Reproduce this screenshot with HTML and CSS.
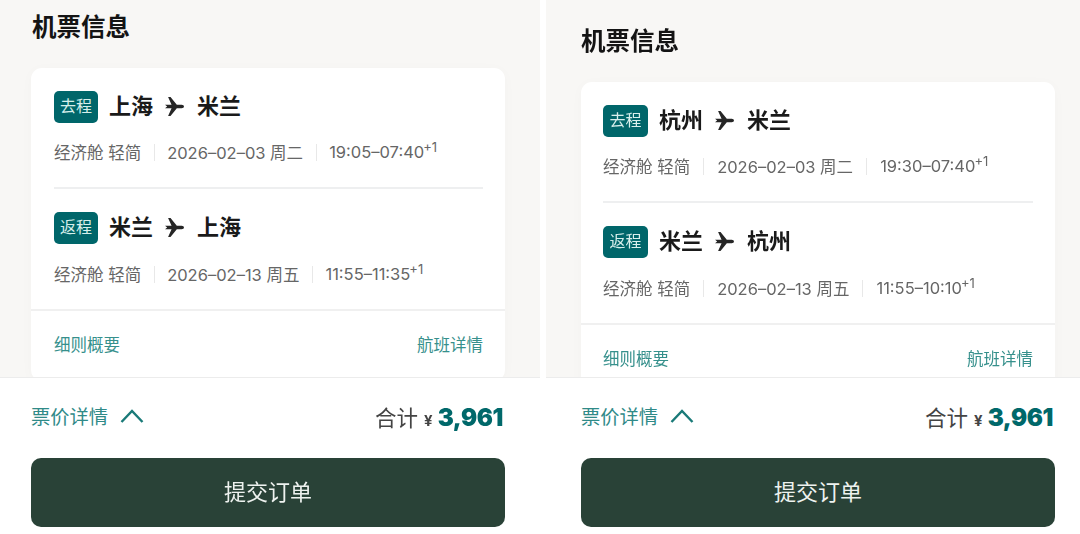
FILE: index.html
```html
<!DOCTYPE html>
<html lang="zh-CN">
<head>
<meta charset="utf-8">
<title>机票信息</title>
<link rel="stylesheet" href="styles.css">
</head>
<body>
<svg class="defs" width="0" height="0" aria-hidden="true">
  <symbol id="plane" viewBox="0 0 20 20">
    <path d="M1 8.400h6.200L3.900 1h2.300l6 7.400h4.600c1.300 0 2.200.7 2.200 1.600s-.9 1.600-2.200 1.600h-4.600l-6 7.400H3.900l3.300-7.400H1l2-1.600z"/>
  </symbol>
</svg>
<main class="screens">
  <section class="phone phone-a">
    <div class="scroll">
      <h2 class="title">机票信息</h2>
      <div class="card">
        <div class="legs">
          <div class="leg">
            <div class="route"><span class="tag">去程</span><span class="city">上海</span><svg class="plane"><use href="#plane"/></svg><span class="city">米兰</span></div>
            <div class="meta"><span>经济舱 轻简</span><i class="sep"></i><span>2026–02–03 周二</span><i class="sep"></i><span>19:05–07:40<sup>+1</sup></span></div>
          </div>
          <div class="leg">
            <div class="route"><span class="tag">返程</span><span class="city">米兰</span><svg class="plane"><use href="#plane"/></svg><span class="city">上海</span></div>
            <div class="meta"><span>经济舱 轻简</span><i class="sep"></i><span>2026–02–13 周五</span><i class="sep"></i><span>11:55–11:35<sup>+1</sup></span></div>
          </div>
        </div>
        <div class="links"><a>细则概要</a><a>航班详情</a></div>
      </div>
    </div>
    <footer class="bar">
      <div class="sum">
        <a class="fare">票价详情<svg class="chev" viewBox="0 0 24 14"><path d="M1.500 13 12 2l10.500 11"/></svg></a>
        <div class="total">合计<span class="yen">¥</span><b class="amount">3,961</b></div>
      </div>
      <button class="submit">提交订单</button>
    </footer>
  </section>
  <section class="phone phone-b">
    <div class="scroll">
      <h2 class="title">机票信息</h2>
      <div class="card">
        <div class="legs">
          <div class="leg">
            <div class="route"><span class="tag">去程</span><span class="city">杭州</span><svg class="plane"><use href="#plane"/></svg><span class="city">米兰</span></div>
            <div class="meta"><span>经济舱 轻简</span><i class="sep"></i><span>2026–02–03 周二</span><i class="sep"></i><span>19:30–07:40<sup>+1</sup></span></div>
          </div>
          <div class="leg">
            <div class="route"><span class="tag">返程</span><span class="city">米兰</span><svg class="plane"><use href="#plane"/></svg><span class="city">杭州</span></div>
            <div class="meta"><span>经济舱 轻简</span><i class="sep"></i><span>2026–02–13 周五</span><i class="sep"></i><span>11:55–10:10<sup>+1</sup></span></div>
          </div>
        </div>
        <div class="links"><a>细则概要</a><a>航班详情</a></div>
      </div>
    </div>
    <footer class="bar">
      <div class="sum">
        <a class="fare">票价详情<svg class="chev" viewBox="0 0 24 14"><path d="M1.500 13 12 2l10.500 11"/></svg></a>
        <div class="total">合计<span class="yen">¥</span><b class="amount">3,961</b></div>
      </div>
      <button class="submit">提交订单</button>
    </footer>
  </section>
</main>
</body>
</html>
```
FILE: styles.css
```css
* { box-sizing: border-box; }
html, body { margin: 0; height: 534px; overflow: hidden; background: #fff; }
body { font-family: Inter, "Noto Sans CJK SC", sans-serif; color: #1a1a1a; }
.defs { position: absolute; }
.screens { display: flex; gap: 6px; height: 534px; filter: blur(.35px); }
.phone { display: flex; flex-direction: column; height: 534px; }
.phone-a { width: 540px; --left: 31px; --right: 35px; --top: 11px; --inset: 23px; --title: 1px; --tag: 44px; --gap: 12.500px; }
.phone-b { width: 534px; --left: 35px; --right: 25px; --top: 25px; --inset: 22px; --title: 0px; --tag: 45px; --gap: 13px; }
.scroll {
  height: 377px; overflow: hidden; background: #f8f7f5;
  padding: var(--top) var(--right) 0 var(--left);
}
.title { margin: 0 0 25px var(--title); font-size: 24.500px; line-height: 32px; font-weight: 700; color: #141414; }
.card { background: #fff; border-radius: 11px; box-shadow: 0 2px 14px rgba(0,0,0,.025); }
.legs { padding: 23px 22px 0 var(--inset); }
.leg { height: 96px; }
.leg + .leg { border-top: 2px solid #eeeff0; height: 122px; padding-top: 23px; }
.leg + .leg .meta { margin-top: 18px; }
.route { display: flex; align-items: center; height: 32px; }
.tag {
  width: var(--tag); height: 32px; border-radius: 5px; background: #00666a; color: #d8efec;
  font-size: 16px; line-height: 31px; text-align: center; margin-right: 11px;
}
.city { font-size: 22px; font-weight: 700; color: #1a1a1a; line-height: 30px; height: 32px; }
.plane { width: 21px; height: 21px; margin: -2px 12px 0 11px; fill: #262626; }
.meta { display: flex; align-items: center; height: 24px; margin-top: 17px; font-size: 16.500px; color: #666; }
.sep { width: 1px; height: 17px; background: #e8e8e8; margin: 0 var(--gap); }
.meta sup { font-size: 13px; line-height: 0; vertical-align: 6px; margin-left: -1px; }
.links {
  display: flex; justify-content: space-between; border-top: 2px solid #f0f0f0;
  padding: 22px 22px 0 var(--inset); height: 72px; font-size: 16.500px; line-height: 24px; color: #36908c;
}
.bar { flex: 1; background: #fff; border-top: 1px solid #ececec; padding: 0 var(--right) 0 var(--left); }
.sum { display: flex; justify-content: space-between; align-items: center; height: 80px; padding-bottom: 4px; }
.fare { display: flex; align-items: center; font-size: 19.300px; color: #2f8a88; }
.chev { width: 24px; height: 14px; margin-left: 12px; fill: none; stroke: #1a7a78; stroke-width: 2.400; }
.total { display: flex; align-items: baseline; font-size: 21.500px; color: #444; }
.yen { font-size: 15px; font-weight: 700; margin: 0 5px 0 6px; color: #444; }
.amount { font-family: Inter, "Noto Sans CJK SC", sans-serif; font-size: 24px; font-weight: 900; color: #00686a; letter-spacing: -.4px; margin-right: 2px; }
.submit {
  display: block; width: 100%; height: 69px; border: 0; border-radius: 10px; background: #294237;
  color: #eef2ef; font: 400 22px "Noto Sans CJK SC", sans-serif; padding: 0 0 5px;
}
```
